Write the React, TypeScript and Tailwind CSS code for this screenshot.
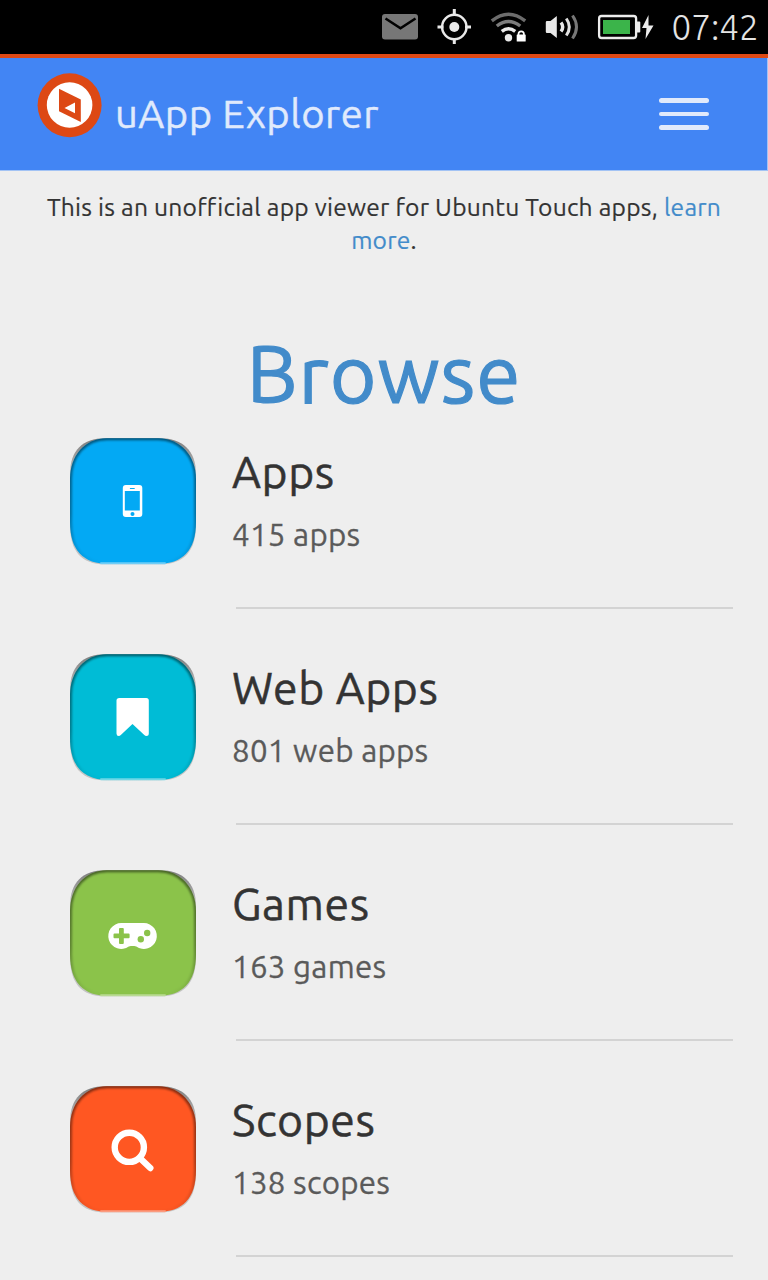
import React from "react";

type Category = {
  id: string;
  title: string;
  count: string;
  color: string;
  light: string;
  glyph: React.ReactNode;
};

const categories: Category[] = [
  {
    id: "apps",
    title: "Apps",
    count: "415 apps",
    color: "#03a9f4",
    light: "#6fcdf7",
    glyph: (
      <g>
        <rect x="53" y="47" width="19.5" height="32" rx="3" fill="#fff" />
        <rect x="55" y="53" width="15" height="19.5" fill="#03a9f4" />
        <rect x="60" y="50" width="5" height="1" rx="0.5" fill="#03a9f4" />
        <circle cx="62.7" cy="76" r="2" fill="#03a9f4" />
      </g>
    ),
  },
  {
    id: "web",
    title: "Web Apps",
    count: "801 web apps",
    color: "#00bcd6",
    light: "#6fd8e6",
    glyph: (
      <path
        d="M49.5 44H76.5Q79 44 79 46.5V79.5Q79 82 76.5 82Q75.5 82 74.5 81L62.7 70L51 81Q50 82 49 82Q46.7 82 46.7 79.5V46.5Q46.7 44 49.5 44Z"
        fill="#fff"
      />
    ),
  },
  {
    id: "games",
    title: "Games",
    count: "163 games",
    color: "#8bc34a",
    light: "#b9da93",
    glyph: (
      <g>
        <path
          d="M51.5 53H74A13 13 0 1 1 66.5 76.6Q65.5 76 64.5 76H61Q60 76 59 76.6A13 13 0 1 1 51.5 53Z"
          fill="#fff"
        />
        <path
          d="M50.200 58h2.800q1 0 1 1v4.500h4.800q1 0 1 1v2.800q0 1-1 1h-4.800v4.700q0 1-1 1h-2.800q-1 0-1-1v-4.700h-4.500q-1 0-1-1v-2.800q0-1 1-1h4.500v-4.500q0-1 1-1Z"
          fill="#8bc34a"
        />
        <circle cx="71" cy="69.3" r="3.2" fill="#8bc34a" />
        <circle cx="77.4" cy="63" r="3.2" fill="#8bc34a" />
      </g>
    ),
  },
  {
    id: "scopes",
    title: "Scopes",
    count: "138 scopes",
    color: "#ff5722",
    light: "#fb9c80",
    glyph: (
      <g fill="none" stroke="#fff" strokeWidth="6.4">
        <circle cx="59.5" cy="61.3" r="14.6" />
        <path d="M70 72L80.5 82" strokeLinecap="round" />
      </g>
    ),
  },
];

const OUTER =
  "M36 0.2H91C113 0.2 127 12 127 36V87C127 113 115 126.3 91 126.3H36C12 126.3 1 113 1 87V36C1 12 14 0.2 36 0.2Z";
const FACE =
  "M38 0.2H89C111 0.2 127 17.500 127 41V84C127 112 114 126 88 126H40C14 126 1 112 1 84V41C1 17.500 16 0.2 38 0.2Z";

function Tile({ category }: { category: Category }) {
  const { id, color, light, glyph } = category;
  return (
    <svg className="h-[128px] w-[128px] shrink-0" viewBox="0 0 128 128">
      <defs>
        <clipPath id={`clip-${id}`}>
          <path d={FACE} />
        </clipPath>
        <linearGradient id={`edge-${id}`} gradientUnits="userSpaceOnUse" x1="0" y1="0" x2="0" y2="127">
          <stop offset="0" stopColor="#000" stopOpacity="0.5" />
          <stop offset="0.3" stopColor="#000" stopOpacity="0.42" />
          <stop offset="0.6" stopColor="#000" stopOpacity="0.33" />
          <stop offset="0.85" stopColor="#000" stopOpacity="0.12" />
          <stop offset="1" stopColor="#000" stopOpacity="0" />
        </linearGradient>
        <linearGradient id={`rim-${id}`} gradientUnits="userSpaceOnUse" x1="0" y1="0" x2="0" y2="40">
          <stop offset="0" stopColor="#7c7c7c" />
          <stop offset="0.5" stopColor="#a2a2a2" />
          <stop offset="1" stopColor="#c4c4c4" />
        </linearGradient>
        <filter id={`soft-${id}`} x="-5%" y="-5%" width="110%" height="110%">
          <feGaussianBlur stdDeviation="0.8" />
        </filter>
      </defs>
      <path d={OUTER} fill={`url(#rim-${id})`} />
      <path d={FACE} fill={color} />
      <g clipPath={`url(#clip-${id})`}>
        <path
          d={FACE}
          fill="none"
          stroke={`url(#edge-${id})`}
          strokeWidth="4"
          filter={`url(#soft-${id})`}
        />
      </g>
      <path d="M32 125.3H96" stroke={light} strokeWidth="2" strokeLinecap="round" />
      <g transform="translate(0.8 0)">{glyph}</g>
    </svg>
  );
}

function StatusBar() {
  return (
    <div className="flex h-[58px] items-start border-b-4 border-[#dd4814] bg-black">
      <svg className="ml-[370px] h-[54px] w-[290px] shrink-0" viewBox="370 0 290 54">
        <rect x="382" y="14" width="36" height="25.5" rx="3" fill="#777" />
        <path d="M385.500 18.500L400.500 28.300L415.500 18.500" fill="none" stroke="#000" strokeWidth="2.600" />
        <g stroke="#e9e9e9" fill="none">
          <circle cx="454.3" cy="27" r="12.2" strokeWidth="2.4" />
          <path d="M454.300 9v6M454.300 38.500v5.500M437.500 27h6M465 27h6" strokeWidth="3" />
        </g>
        <circle cx="454.3" cy="27" r="5" fill="#e9e9e9" />
        <g fill="none" strokeWidth="3.4">
          <path d="M491.800 20.800Q508.500 7.500 525.200 20.800" stroke="#6c6c6c" />
          <path d="M496.800 26Q508.500 16.800 520.200 26" stroke="#7c7c7c" />
          <path d="M501.800 31.300Q508.500 26 515.200 31.300" stroke="#e9e9e9" />
        </g>
        <circle cx="508.5" cy="37.7" r="3.7" fill="#e9e9e9" />
        <path d="M518.500 36v-2a2.700 2.700 0 0 1 5.400 0v2" fill="none" stroke="#fff" strokeWidth="1.7" />
        <rect x="516.7" y="34.5" width="9" height="7" rx="0.6" fill="#fff" />
        <path d="M547 21h3.500l6.300-5v22l-6.300-5H547q-1.200 0-1.200-1.200V22.200Q545.800 21 547 21Z" fill="#e9e9e9" />
        <path d="M561 22.500q3.400 4.500 0 9" fill="none" stroke="#e9e9e9" strokeWidth="3.4" />
        <path d="M566.300 18.500q6 8.500 0 17" fill="none" stroke="#e0e0e0" strokeWidth="3" />
        <path d="M572.500 15.500q8 11.500 0 23" fill="none" stroke="#777" strokeWidth="3" />
        <rect x="599.1" y="16" width="37" height="22" rx="2.5" fill="none" stroke="#ececec" strokeWidth="2.3" />
        <rect x="603" y="20" width="27" height="14" fill="#3bb44a" />
        <path d="M636 21.500h3.300q1 0 1 1v9q0 1-1 1H636Z" fill="#ececec" />
        <path d="M648.500 15L642 28h4.500l-1 11L653.500 25.500h-5Z" fill="#ececec" />
      </svg>
      <span className="ml-[11.5px] h-[54px] whitespace-nowrap text-[35px] leading-[55px] font-light text-[#e4e4e4]">
        07:42
      </span>
    </div>
  );
}

function Header() {
  return (
    <header className="flex h-[113px] items-start border-r border-b border-[#a3c3f4] bg-[#4285f4] pr-[58px] pl-[37px]">
      <svg className="mt-[15px] h-[65px] w-[65px] shrink-0" viewBox="0 0 65 65">
        <circle cx="32.6" cy="32.3" r="32" fill="#dd4814" />
        <circle cx="32.6" cy="32" r="22.8" fill="#fff" />
        <path d="M22 15.700L43.800 26.500V49L22 38.200Z" fill="#dd4814" />
        <path d="M27.500 35L38 29.500V40.200Z" fill="#fff" />
      </svg>
      <h1 className="ml-[13px] text-[40px] leading-[111px] tracking-[0.5px] whitespace-nowrap text-[#e0eafc] [-webkit-text-stroke:0.4px_#e0eafc]">
        uApp Explorer
      </h1>
      <div className="mt-[40px] ml-auto flex w-[50px] flex-col gap-[9px]">
        <span className="h-[4.5px] rounded-full bg-[#e1eafb]" />
        <span className="h-[4.5px] rounded-full bg-[#e1eafb]" />
        <span className="h-[4.5px] rounded-full bg-[#e1eafb]" />
      </div>
    </header>
  );
}

export default function App() {
  return (
    <div className="h-[1280px] w-[768px] overflow-hidden bg-[#eeeeee] font-['Ubuntu','Noto_Sans',sans-serif]">
      <StatusBar />
      <Header />
      <main>
        <p className="flex h-[179px] flex-col items-center pt-[20px] text-[24.6px] leading-[33px] tracking-[0.23px] whitespace-nowrap text-[#333] [-webkit-text-stroke:0.2px]">
          <span>
            This is an unofficial app viewer for Ubuntu Touch apps, <a className="text-[#428bca]">learn</a>
          </span>
          <span>
            <a className="text-[#428bca]">more</a>.
          </span>
        </p>
        <h2 className="-mt-[18px] h-[61px] text-center text-[80px] leading-[82px] tracking-[1px] text-[#428bca] [-webkit-text-stroke:1.2px]">
          Browse
        </h2>
        {categories.map((category) => (
          <section key={category.id} className="flex h-[216px] pt-[45px] pr-[35px] pl-[69px]">
            <Tile category={category} />
            <div className="ml-[35px] flex grow flex-col whitespace-nowrap">
              <h3 className="h-[70px] text-[44.5px] leading-[68px] tracking-[0.6px] text-[#333] [-webkit-text-stroke:0.5px]">
                {category.title}
              </h3>
              <p className="h-[54px] text-[31.3px] leading-[53px] tracking-[0.25px] text-[#5a5a5a] [-webkit-text-stroke:0.3px]">
                {category.count}
              </p>
              <div className="mt-auto ml-1 h-[2px] bg-[#d3d3d3]" />
            </div>
          </section>
        ))}
      </main>
    </div>
  );
}
